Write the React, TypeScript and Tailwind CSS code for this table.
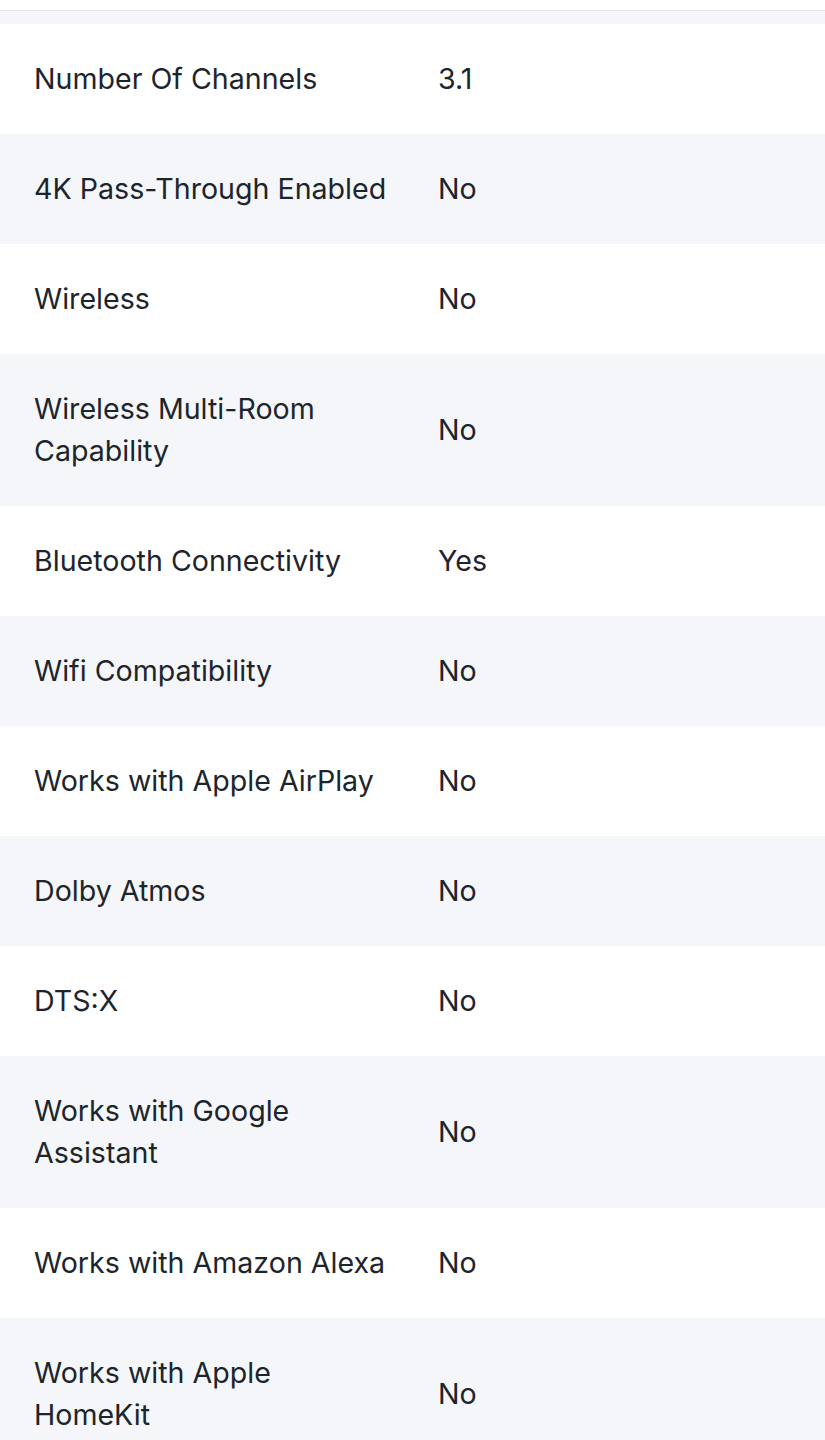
import React from 'react';

type Spec = { label: string; value: string };

const specs: Spec[] = [
  { label: 'Number Of Channels', value: '3.1' },
  { label: '4K Pass-Through Enabled', value: 'No' },
  { label: 'Wireless', value: 'No' },
  { label: 'Wireless Multi-Room Capability', value: 'No' },
  { label: 'Bluetooth Connectivity', value: 'Yes' },
  { label: 'Wifi Compatibility', value: 'No' },
  { label: 'Works with Apple AirPlay', value: 'No' },
  { label: 'Dolby Atmos', value: 'No' },
  { label: 'DTS:X', value: 'No' },
  { label: 'Works with Google Assistant', value: 'No' },
  { label: 'Works with Amazon Alexa', value: 'No' },
  { label: 'Works with Apple HomeKit', value: 'No' },
];

export default function App() {
  return (
    <div className="min-h-screen bg-white font-['Inter',sans-serif] text-[#1d252c]">
      <div className="h-[10px] bg-white" />
      <div className="h-[14px] border-t border-[#e1e2e4] bg-[#f4f6f9]" />
      <div>
        {specs.map((s, i) => (
          <div
            key={s.label}
            className={`grid grid-cols-[404px_1fr] items-center py-[34px] text-[28.6px] leading-[42px] ${
              i % 2 === 0 ? 'bg-white' : 'bg-[#f4f6f9]'
            }`}
          >
            <div className="pl-[34px] pr-[15px]">{s.label}</div>
            <div className="pl-[34px]">{s.value}</div>
          </div>
        ))}
      </div>
    </div>
  );
}
